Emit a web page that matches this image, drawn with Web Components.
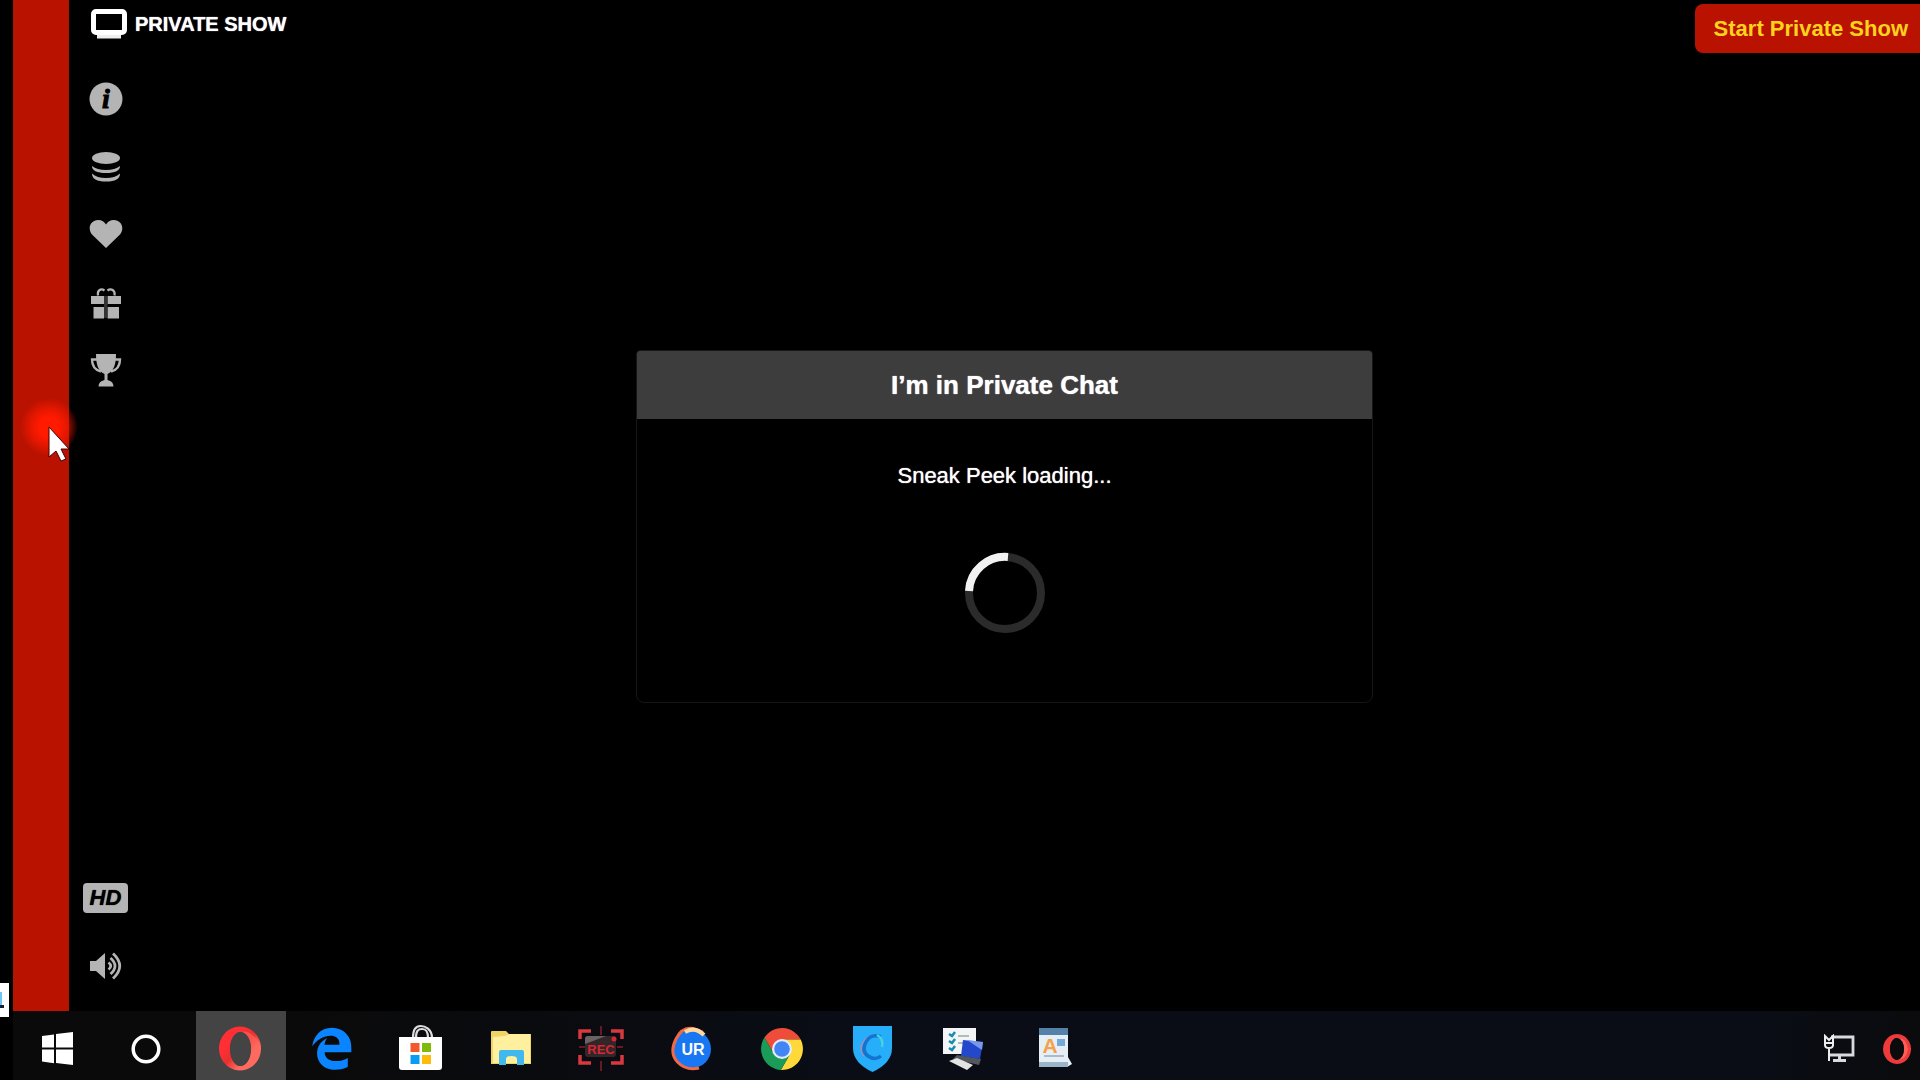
<!DOCTYPE html>
<html lang="en">
<head>
<meta charset="utf-8">
<title>Private Show</title>
<style>
	body {
		margin: 0;
		background: #000;
		color: #fff;
		font-family: "Liberation Sans", Arial, sans-serif;
	}
</style>
</head>
<body>
<desktop-screen>
	<show-stage slot="stage">
		<span slot="title">PRIVATE SHOW</span>
		<span slot="action">Start Private Show</span>
		<tool-button slot="tools" icon="info" label="Info"></tool-button>
		<tool-button slot="tools" icon="coins" label="Tokens"></tool-button>
		<tool-button slot="tools" icon="heart" label="Favorite"></tool-button>
		<tool-button slot="tools" icon="gift" label="Gifts"></tool-button>
		<tool-button slot="tools" icon="trophy" label="Awards"></tool-button>
		<tool-button slot="player" label="Quality"><hd-badge>HD</hd-badge></tool-button>
		<tool-button slot="player" icon="sound" label="Volume"></tool-button>
		<status-dialog>
			<span slot="heading">I’m in Private Chat</span>
			Sneak Peek loading...
		</status-dialog>
	</show-stage>
	<task-bar slot="taskbar">
		<task-item icon="windows" label="Start" system></task-item>
		<task-item icon="cortana" label="Cortana" system></task-item>
		<task-item icon="opera" label="Opera" active></task-item>
		<task-item icon="edge" label="Edge"></task-item>
		<task-item icon="store" label="Store"></task-item>
		<task-item icon="folder" label="Explorer"></task-item>
		<task-item icon="rec" label="Recorder"></task-item>
		<task-item icon="ur" label="UR Browser"></task-item>
		<task-item icon="chrome" label="Chrome"></task-item>
		<task-item icon="shield" label="VPN"></task-item>
		<task-item icon="computer" label="System"></task-item>
		<task-item icon="wordpad" label="WordPad"></task-item>
		<ui-icon slot="tray" name="network"></ui-icon>
		<ui-icon slot="tray" name="operaSmall"></ui-icon>
	</task-bar>
	<mouse-pointer slot="overlay"></mouse-pointer>
</desktop-screen>

<script>
// each entry: width, height, markup
const ICONS = {
	monitor: [36, 30, `
		<rect x="2.5" y="2.5" width="31" height="21" rx="2.5" fill="none" stroke="#fff" stroke-width="5"/>
		<path d="M6 26h24v3.5H6z" fill="#eee"/>`],
	info: [34, 34, `
		<circle cx="17" cy="17" r="16.5" fill="#b4b4b4"/>
		<text x="17" y="26" text-anchor="middle" font-family="Liberation Serif, serif" font-style="italic" font-weight="bold" font-size="28" fill="#000" stroke="#000">i</text>`],
	coins: [34, 34, `
		<g fill="#b4b4b4">
			<ellipse cx="17" cy="8" rx="14" ry="6"/>
			<path d="M3 16q5 4 14 4t14-4q0 7-14 7T3 16z"/>
			<path d="M3 23.5q5 4.500 14 4.500t14-4.500q0 8-14 8T3 23.500z"/>
		</g>`],
	heart: [34, 34, `
		<path d="M17 30L3.500 17C-2.500 10 2 2 9 2c4 0 6.500 2 8 4.500C18.500 4 21 2 25 2c7 0 11.500 8 5.500 15z" fill="#b4b4b4"/>`],
	gift: [34, 34, `
		<g fill="#b4b4b4">
			<path d="M2 10h13v8H2zM18.500 10H32v8H18.500zM4.500 21H15v11.500H4.500zM18.500 21H30v11.500H18.500z"/>
			<path d="M15 10h3.500v22H15z" fill="#333"/>
			<path d="M9 9.500C8 4 12 2 15.500 4.500M25.500 9.500C26.500 4 22 2 18.500 4.500" fill="none" stroke="#b4b4b4" stroke-width="2.200"/>
		</g>`],
	trophy: [34, 34, `
		<path d="M7 0h20c0 10-2 17-8.500 20v6c4 1 6 3 6 6.500h-15c0-3.500 2-5.500 6-6.500v-6C9 17 7 10 7 0z" fill="#b4b4b4"/>
		<path d="M8 5.500H3c0 6 3 10.500 9 12M26 5.500h5c0 6-3 10.500-9 12" fill="none" stroke="#b4b4b4" stroke-width="2.400"/>`],
	sound: [34, 34, `
		<path d="M1 12h6l9-8v26l-9-8H1z" fill="#b4b4b4"/>
		<path d="M19.500 13.500q4.500 3.500 0 7M21.500 9q9 8 0 16M24 4.500q13.500 12.500 0 25" fill="none" stroke="#b4b4b4" stroke-width="2.800"/>`],
	windows: [48, 48, `
		<path d="M9 12l12-1.500v13H9zM23 10l17-2v15.500H23zM9 25.500h12v13.700L9 37.500zM23 25.500h17V41l-17-2z" fill="#fff"/>`],
	cortana: [48, 48, `
		<circle cx="25" cy="25" r="12.800" fill="none" stroke="#fff" stroke-width="3.500"/>`],
	opera: [48, 48, `
		<linearGradient id="ring" x1="0" x2="1" y1="0" y2="1">
			<stop offset=".3" stop-color="#ff2f35"/>
			<stop offset=".5" stop-color="#e8302f"/>
			<stop offset=".7" stop-color="#ff6a60"/>
		</linearGradient>
		<path d="M23 2.500a21 22 0 1 0 .01 0zM23.500 8a10.500 17 0 1 1-.01 0z" fill-rule="evenodd" fill="url(#ring)"/>
		<path d="M24 8q6-2 12 3.500 7.500 6 7.500 13t-7.500 13Q30 43 24 42q10-3 10-17T24 8z" fill="#ff6a60" opacity=".6"/>
		<ellipse cx="23.500" cy="25" rx="10.500" ry="17" fill="#444"/>`],
	edge: [48, 48, `
		<path transform="translate(3 3) scale(.085)" fill="#0a84ff" d="M486.286 243.671c0-44.032-7.754-84.465-28.801-122.405C416.498 47.879 343.912 8.001 258.893 8.001 118.962 7.724 40.617 113.214 26.056 227.679c42.429-61.312 117.073-121.376 220.375-124.966 0 0 109.666 0 99.419 104.957H169.997c6.369-37.386 18.554-58.986 34.339-78.926-75.048 34.893-121.850 96.096-120.742 188.315.83 71.448 50.124 144.836 120.743 171.976 83.357 31.847 192.776 7.200 240.132-21.324V363.307c-80.864 56.494-270.871 60.925-272.255-67.572h314.073z"/>`],
	store: [48, 48, `
		<path d="M16 14C16 5 19 2 23.500 2S35 5 35 14M19 14c0-7 2-9 6-9s6 2 6 9" fill="none" stroke="#ddd" stroke-width="2.200"/>
		<path d="M2 13h43v30q0 3-3 3H5q-3 0-3-3z" fill="#fff"/>
		<path d="M13.500 19h9v9h-9z" fill="#f4592b"/><path d="M25 19h9v9h-9z" fill="#80bb0b"/>
		<path d="M13.500 31h9v9h-9z" fill="#0a9cf0"/><path d="M25 31h9v9h-9z" fill="#fdbb0b"/>`],
	folder: [48, 48, `
		<path d="M4 8q0-1 1-1h14l3 3h22v30H4z" fill="#f0d565"/>
		<path d="M6 13l12-1 5-2h20v29H6z" fill="#fff0a0"/>
		<path d="M12 41V28q0-2 2-2h21q2 0 2 2v13h-7v-6q0-3-5.500-3T19 35v6z" fill="#41b9ee"/>`],
	rec: [48, 48, `
		<path d="M3 15V7h11M34 7h11v8M3 31v8h11M34 39h11v-8" fill="none" stroke="#d9383f" stroke-width="3.500"/>
		<path d="M24 2v9M24 37v10M2 23h6M40 23h6" stroke="#8d1c24" stroke-width="1.500"/>
		<rect x="8" y="12" width="31" height="21" rx="3" fill="#332629"/>
		<path d="M8 20V15q0-3 3-3h18z" fill="#6b6264"/>
		<text x="24" y="30" text-anchor="middle" font-family="Liberation Sans, sans-serif" font-weight="bold" font-size="13" fill="#d52734">REC</text>
		<circle cx="37" cy="15" r="2.500" fill="#d52734"/>`],
	ur: [48, 48, `
		<circle cx="25" cy="25" r="19" fill="#1877f2"/>
		<path d="M32 44Q19 47 10.500 38T9 15 29 5.500l7 3" fill="none" stroke="#f26a45" stroke-width="3"/>
		<path d="M18 8q10-6 19 3" fill="none" stroke="#ffd9a0" stroke-width="4"/>
		<text x="26" y="31" text-anchor="middle" font-family="Liberation Sans, sans-serif" font-weight="bold" font-size="16" fill="#fff">UR</text>`],
	chrome: [48, 48, `
		<g transform="translate(1 1)">
			<path d="M6.400 12.600A21 21 0 0 1 42.700 14.500H24L15.800 28.750z" fill="#ef4d3a"/>
			<path d="M42.700 14.500A21 21 0 0 1 22.900 44.900L32.200 28.750 24 14.500z" fill="#ffd83a"/>
			<path d="M22.900 44.900A21 21 0 0 1 6.400 12.600L15.800 28.750h16.400z" fill="#1a9b57"/>
			<circle cx="24" cy="24" r="10" fill="#e4ecfa"/><circle cx="24" cy="24" r="7.800" fill="#4285f4"/>
		</g>`],
	shield: [48, 48, `
		<path d="M6 2h39v22q0 15-19.500 24Q6 39 6 24z" fill="#26aefa"/>
		<path d="M34 14q-9-6-16 2t-1 16" fill="none" stroke="#9b8fc4" stroke-width="2"/>
		<path d="M34 13q-10-4-15 5t2 14 13 0" fill="none" stroke="#1275cf" stroke-width="3.500"/>
		<path d="M30 11q7 4 5 12" fill="none" stroke="#45d2df" stroke-width="2.500"/>`],
	computer: [48, 48, `
		<g transform="translate(3 0)">
			<path d="M3 4h33v26H3z" fill="#f3f5f7"/>
			<path d="M9 10l3 2 3-4M9 17l3 2 3-4M9 24l3 2 3-4" fill="none" stroke="#168caf" stroke-width="2.500"/>
			<path d="M18 12h11M18 19h6" stroke="#9aa" stroke-width="1.500"/>
			<path d="M23 16l20 2-3 17-19-3z" fill="#2448cc"/><path d="M27 16l16 2-1 8z" fill="#7799ed"/>
			<path d="M17 31l24 4-2 6-26-6z" fill="#52565f"/>
			<path d="M9 37l8-3 16 7-6 5z" fill="#e3e3e3"/>
		</g>`],
	wordpad: [48, 48, `
		<g transform="translate(2 0)">
			<path d="M10 5h29v28l4 7-5 3H10z" fill="#e6eff5"/>
			<path d="M10 4h29v7H10z" fill="#5482a8"/><path d="M10 38h29v5H10z" fill="#9bb5c8"/>
			<path d="M28 15h8v7h-8z" fill="#73aad7"/><path d="M15 32h20" stroke="#abc" stroke-width="2"/>
			<text x="21" y="29" text-anchor="middle" font-family="Liberation Sans, sans-serif" font-weight="bold" font-size="21" fill="#f6a147">A</text>
		</g>`],
	network: [32, 30, `
		<path d="M8 3h22v18H7" fill="none" stroke="#d8dade" stroke-width="2.800"/>
		<path d="M10 26.500h13M16.500 22v4" stroke="#d8dade" stroke-width="3"/>
		<path d="M2 2v9q0 3 4 3t4-3V2L6 6zM6 14v13M3 9h6" fill="none" stroke="#eee" stroke-width="2"/>`],
	operaSmall: [28, 30, `
		<path d="M14 0a14 15 0 1 0 .01 0zM14 4a7 11 0 1 1-.01 0z" fill-rule="evenodd" fill="#ed3a3a"/>
		<path d="M14 4q9-1 11 11-2 12-11 11 7-2 7-11T14 4z" fill="#ff5e57"/>
		<ellipse cx="14" cy="15" rx="7" ry="11" fill="#0b0b0d"/>`]
};

class UiIcon extends HTMLElement {
	constructor() {
		super();
		this.attachShadow({ mode: "open" });
	}

	connectedCallback() {
		const [width, height, shapes] = ICONS[this.getAttribute("name")];
		this.shadowRoot.innerHTML = `
			<style>
				:host { display: block; flex: none; }
				svg { display: block; }
			</style>
			<svg width="${width}" height="${height}" viewBox="0 0 ${width} ${height}" aria-hidden="true">${shapes}</svg>
		`;
	}
}

class DesktopScreen extends HTMLElement {
	constructor() {
		super();
		this.attachShadow({ mode: "open" });
		this.shadowRoot.innerHTML = `
			<style>
				:host {
					display: flex;
					flex-direction: column;
					position: relative;
					box-sizing: border-box;
					min-height: 100vh;
					padding-left: 13px;
					overflow: hidden;
				}
				.main { display: flex; flex: 1; }
				.strip { flex: none; width: 56px; background: #b91200; }
				::slotted(show-stage) { flex: 1; }
				/* corner of a window peeking out behind the desktop edge */
				.peek {
					position: absolute;
					left: 0;
					bottom: 63px;
					width: 9px;
					height: 34px;
					background: #fff;
				}
				.peek svg { display: block; }
			</style>
			<div class="main">
				<div class="strip"></div>
				<slot name="stage"></slot>
			</div>
			<slot name="taskbar"></slot>
			<div class="peek">
				<svg width="9" height="34"><path d="M0 9h2v13H0z" fill="#6cc5f5"/><path d="M0 22h4v3H0z" fill="#123"/></svg>
			</div>
			<slot name="overlay"></slot>
		`;
	}
}

class ShowStage extends HTMLElement {
	constructor() {
		super();
		this.attachShadow({ mode: "open" });
		this.shadowRoot.innerHTML = `
			<style>
				:host { display: flex; flex-direction: column; }
				header {
					display: flex;
					justify-content: space-between;
					align-items: flex-start;
					height: 65px;
				}
				h1 {
					display: flex;
					align-items: center;
					gap: 8px;
					margin: 0;
					padding: 9px 0 0 22px;
					font-size: 20px;
					line-height: 30px;
					text-shadow: 0 0 1px #fff;
				}
				button {
					margin: 4px 0 0;
					padding: 0 12px 0 19px;
					border: 0;
					border-radius: 8px 0 0 8px;
					background: #b91200;
					color: #ffd21c;
					font: bold 22px/49px "Liberation Sans", Arial, sans-serif;
				}
				.content { display: flex; flex: 1; }
				nav {
					display: flex;
					flex-direction: column;
					justify-content: space-between;
					width: 73px;
					padding-bottom: 11px;
				}
				main {
					display: flex;
					flex: 1;
					align-items: center;
					justify-content: center;
					padding: 0 53px 24px 0;
				}
			</style>
			<header>
				<h1><ui-icon name="monitor"></ui-icon><slot name="title"></slot></h1>
				<button type="button"><slot name="action"></slot></button>
			</header>
			<div class="content">
				<nav>
					<div><slot name="tools"></slot></div>
					<div><slot name="player"></slot></div>
				</nav>
				<main><slot></slot></main>
			</div>
		`;
	}
}

class ToolButton extends HTMLElement {
	constructor() {
		super();
		this.attachShadow({ mode: "open" });
	}

	connectedCallback() {
		const icon = this.getAttribute("icon");
		this.shadowRoot.innerHTML = `
			<style>
				:host { display: block; }
				button {
					display: flex;
					align-items: center;
					justify-content: center;
					width: 100%;
					height: 68px;
					padding: 0;
					border: 0;
					background: none;
				}
			</style>
			<button type="button" aria-label="${this.getAttribute("label")}">
				${icon ? `<ui-icon name="${icon}"></ui-icon>` : "<slot></slot>"}
			</button>
		`;
	}
}

class HdBadge extends HTMLElement {
	constructor() {
		super();
		this.attachShadow({ mode: "open" });
		this.shadowRoot.innerHTML = `
			<style>
				:host {
					display: block;
					width: 45px;
					border-radius: 4px;
					background: #b4b4b4;
					color: #000;
					font: italic bold 22px/30px "Liberation Sans", Arial, sans-serif;
					text-align: center;
					text-shadow: 0 0 1px #000;
				}
			</style>
			<slot></slot>
		`;
	}
}

class StatusDialog extends HTMLElement {
	constructor() {
		super();
		this.attachShadow({ mode: "open" });
		this.shadowRoot.innerHTML = `
			<style>
				:host {
					display: block;
					box-sizing: border-box;
					width: 100%;
					max-width: 737px;
					border: 1px solid #161616;
					border-radius: 4px 4px 8px 8px;
					overflow: hidden;
				}
				h2 {
					margin: 0;
					background: #3d3d3d;
					font-size: 26px;
					line-height: 68px;
					text-align: center;
					text-shadow: 0 0 1px #fff;
				}
				.body {
					display: flex;
					flex-direction: column;
					align-items: center;
					gap: 61px;
					padding: 42px 20px 68px;
				}
				p {
					margin: 0;
					font-size: 22px;
					line-height: 30px;
					text-shadow: 0 0 1px #fff;
				}
				.spinner { display: block; }
			</style>
			<h2><slot name="heading"></slot></h2>
			<div class="body">
				<p><slot></slot></p>
				<svg class="spinner" width="82" height="82" viewBox="0 0 82 82" fill="none" stroke-width="8">
					<circle cx="41" cy="41" r="36" stroke="#2b2b2b"/>
					<path d="M5 39A36 36 0 0 1 44 5" stroke="#f2f2f2"/>
				</svg>
			</div>
		`;
	}
}

class TaskBar extends HTMLElement {
	constructor() {
		super();
		this.attachShadow({ mode: "open" });
		this.shadowRoot.innerHTML = `
			<style>
				:host {
					display: flex;
					justify-content: space-between;
					height: 69px;
					background: linear-gradient(90deg, #0a0a0a 15%, #0a0d16 45%, #0a0d15 92%, #0b0b0d);
				}
				.items { display: flex; }
				.tray {
					display: flex;
					align-items: center;
					gap: 28px;
					padding: 7px 9px 0 0;
				}
			</style>
			<div class="items"><slot></slot></div>
			<div class="tray"><slot name="tray"></slot></div>
		`;
	}
}

class TaskItem extends HTMLElement {
	constructor() {
		super();
		this.attachShadow({ mode: "open" });
	}

	connectedCallback() {
		this.shadowRoot.innerHTML = `
			<style>
				:host { display: block; width: 90px; }
				:host([system]) { width: 88px; }
				:host([active]) { margin-left: 7px; }
				:host([active]) button { background: #444; }
				button {
					display: flex;
					align-items: center;
					justify-content: center;
					width: 100%;
					height: 100%;
					padding: 5px 0 0;
					border: 0;
					background: none;
				}
			</style>
			<button type="button" aria-label="${this.getAttribute("label")}">
				<ui-icon name="${this.getAttribute("icon")}"></ui-icon>
			</button>
		`;
	}
}

class MousePointer extends HTMLElement {
	constructor() {
		super();
		this.attachShadow({ mode: "open" });
		this.shadowRoot.innerHTML = `
			<style>
				/* the pointer floats over the page, its click glow behind it */
				:host {
					position: absolute;
					left: 19px;
					top: 396px;
					pointer-events: none;
				}
				svg { display: block; }
			</style>
			<svg width="60" height="70" viewBox="0 0 60 70">
				<radialGradient id="glow">
					<stop offset=".35" stop-color="#ff1a00"/>
					<stop offset=".65" stop-color="#ff1a00" stop-opacity=".6"/>
					<stop offset="1" stop-color="#ff1a00" stop-opacity="0"/>
				</radialGradient>
				<circle cx="30" cy="31" r="29" fill="url(#glow)"/>
				<path d="M30 31v30l7-6 5 10 5-2-5-10h8z" fill="#fff" stroke="#400" stroke-width="1"/>
			</svg>
		`;
	}
}

customElements.define("ui-icon", UiIcon);
customElements.define("desktop-screen", DesktopScreen);
customElements.define("show-stage", ShowStage);
customElements.define("tool-button", ToolButton);
customElements.define("hd-badge", HdBadge);
customElements.define("status-dialog", StatusDialog);
customElements.define("task-bar", TaskBar);
customElements.define("task-item", TaskItem);
customElements.define("mouse-pointer", MousePointer);
</script>
</body>
</html>
